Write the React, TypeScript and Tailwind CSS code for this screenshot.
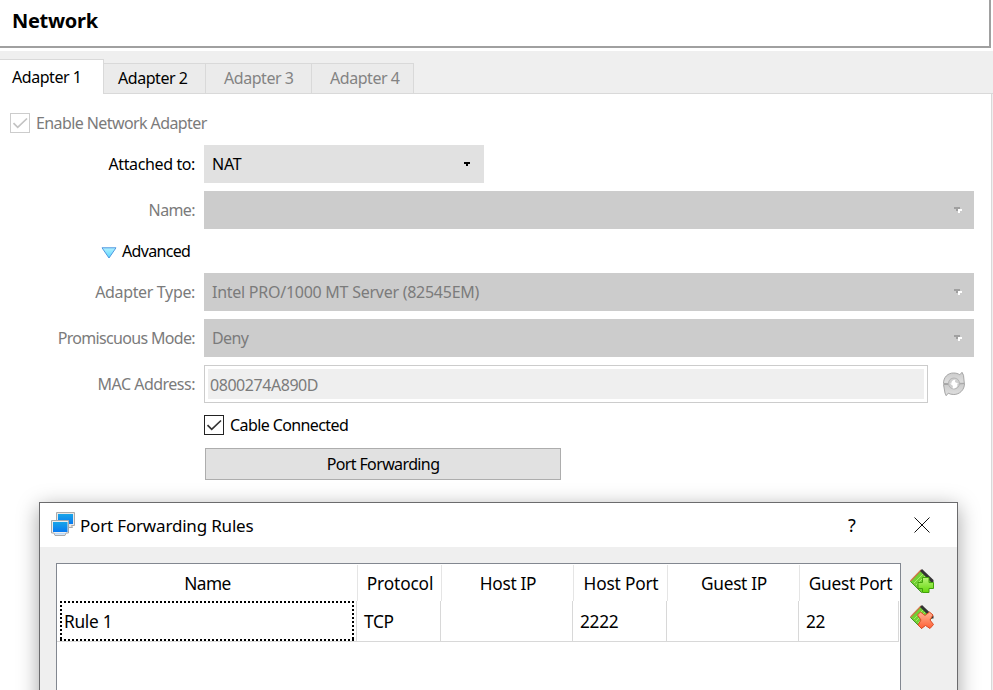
import type { ReactNode } from "react";

const tabs = [
  { label: "Adapter 2", box: "w-[102px] pl-[14px]", color: "text-black" },
  { label: "Adapter 3", box: "w-[106px] pl-[18px]", color: "text-[#838383]" },
  { label: "Adapter 4", box: "w-[102px] pl-[18px]", color: "text-[#838383]" },
];

const columns = [
  { name: "Name", value: "Rule 1", head: "w-[301px] pl-px", cell: "w-[300px] pl-[7px]", track: "tracking-[-0.6px]" },
  { name: "Protocol", value: "TCP", head: "w-[84px] pl-px", cell: "w-[84px] pl-[7px]", track: "tracking-[-0.150px]" },
  { name: "Host IP", value: "", head: "w-[132px] pl-px", cell: "w-[132px]", track: "tracking-[-0.3px]" },
  { name: "Host Port", value: "2222", head: "w-[94px] pl-px", cell: "w-[94px] pl-[7px]", track: "tracking-[-0.2px]" },
  { name: "Guest IP", value: "", head: "w-[132px] pl-px", cell: "w-[132px]", track: "tracking-[-0.3px]" },
  { name: "Guest Port", value: "22", head: "w-[101px] border-r-0", cell: "w-[100px] pl-[7px]", track: "tracking-[-0.3px]" },
];

function Label({ children, className = "" }: { children: ReactNode; className?: string }) {
  return <div className={`w-[196px] shrink-0 whitespace-nowrap pr-px text-right ${className}`}>{children}</div>;
}

function DisabledArrow() {
  return (
    <svg width="9" height="7" viewBox="0 0 9 7" shapeRendering="crispEdges">
      <path d="M4 2h4v2H6v2H4z" fill="#fff" />
      <path d="M0 0h6v2H4v2H2V2H0z" fill="#a0a0a0" />
    </svg>
  );
}

function DisabledSelect({ children }: { children?: ReactNode }) {
  return (
    <div className="ml-2 flex h-[38px] w-[770px] items-center justify-between bg-[#ccc] pl-2 pr-[11px]">
      <span>{children}</span>
      <DisabledArrow />
    </div>
  );
}

function Check({ color }: { color: string }) {
  return (
    <svg width="18" height="18" viewBox="0 0 18 18" fill="none" stroke={color} strokeWidth="1.7">
      <path d="M2.5 9.2l4.2 4.2L16 4.5" />
    </svg>
  );
}

function RefreshIcon() {
  return (
    <svg width="24" height="26" viewBox="0 0 24 26">
      <defs>
        <linearGradient id="ring" x1="0" y1="0" x2="0" y2="1">
          <stop offset="0" stopColor="#cbcbcb" />
          <stop offset="1" stopColor="#e0e0e0" />
        </linearGradient>
      </defs>
      <g fill="url(#ring)" stroke="#a6a6a6" strokeWidth="1">
        <path d="M1.500 12.500C1.500 6 6 2 11.500 2c2.500 0 4.500.6 6.300 1.800L20 1.300l1.500 3 .8 8H13z" />
        <path d="M22.500 12.500c0 6.500-5 11-10.700 11-2.300 0-4-.5-5.600-1.300L4.200 24.700 3 22l-1.500-8.500h9z" />
        <path d="M6.500 12.500c0-3.500 2.500-5.500 5.500-5.500 3.500 0 5.500 2.500 5.500 5.500s-2.500 5.500-5.500 5.500-5.500-2.300-5.500-5.500z" fill="#cfcfcf" stroke="#b5b5b5" />
      </g>
      <path
        d="M13.500 8.500c-3.200.3-4.500 2.300-4 4l-1.500 0 3 2.500c-.5 1-.3 2-.3 2.500 3.500 0 5.300-2 4.500-4.500h1.500l-3.700-2c0-1 .2-1.800.5-2.500z"
        fill="#fff"
      />
    </svg>
  );
}

function WindowsIcon() {
  return (
    <svg width="25" height="25" viewBox="0 0 25 25">
      <defs>
        <linearGradient id="screen" x1="0" y1="0" x2="0" y2="1">
          <stop offset="0" stopColor="#19a5e8" />
          <stop offset="1" stopColor="#0879f0" />
        </linearGradient>
      </defs>
      <path d="M5.500.5h18v13h-3l1 2h-8v-2h-8z" fill="#e8e8e8" stroke="#aaa" />
      <path d="M7 2h15v10H7z" fill="url(#screen)" />
      <path d="M.5 8.500h17v12.500h-2.500l-1 2.500h-10l-1-2.500h-2.500z" fill="#eee" stroke="#aaa" />
      <path d="M2 10h14.500v10H2z" fill="url(#screen)" />
      <path d="M4 21h10v1.500H4z" fill="#b8d8f8" />
    </svg>
  );
}

function RuleIcon({ remove = false }: { remove?: boolean }) {
  return (
    <svg width="26" height="26" viewBox="0 0 26 26">
      <defs>
        <linearGradient id="plus" x1="0" y1="0" x2="0" y2="1">
          <stop offset="0" stopColor="#b7f477" />
          <stop offset="1" stopColor="#65d80c" />
        </linearGradient>
        <linearGradient id="cross" x1="0" y1="0" x2="0" y2="1">
          <stop offset="0" stopColor="#ffb393" />
          <stop offset="1" stopColor="#ff6035" />
        </linearGradient>
      </defs>
      <path d="M1.500 13.500L12.500 2l11 11.500-11 11z" fill="#72cf33" stroke="#45942a" />
      <path d="M5 15L15 5M7 17L17 7M9 19L19 9" stroke="#a4ec67" strokeWidth="1" />
      <path d="M1.500 13L12 2" stroke="#d87a4a" strokeWidth="1.200" />
      <path d="M11 3l2-2 11.500 11v2.500h-2z" fill="#333" />
      {remove ? (
        <path
          d="M8.500 11l3-3 4.500 3.500L20.500 8l3.500 3-3 5 3.500 4.500-3.500 4-4.500-3-4 3-3.500-3.500 3-5z"
          fill="url(#cross)"
          stroke="#db4b26"
        />
      ) : (
        <path d="M13.500 9.500h6.500v5h4.500v6H20v4h-6.500v-4H9v-6h4.500z" fill="url(#plus)" stroke="#42a10c" />
      )}
    </svg>
  );
}

function PortForwardingDialog() {
  return (
    <section className="absolute left-[39px] top-[502px] h-[260px] w-[919px] border border-[#6b6b6d] bg-[#efefef] font-['Noto_Sans',sans-serif] text-[17.300px] text-black shadow-[0_5px_20px_rgba(0,0,0,0.36)]">
      <header className="flex h-[44px] items-center bg-white">
        <div className="ml-[11px] mt-[-1px]">
          <WindowsIcon />
        </div>
        <h2 className="ml-1 w-[760px] whitespace-nowrap pt-px text-[17px] tracking-[-0.180px]">Port Forwarding Rules</h2>
        <span className="ml-2 w-[12px] text-[18px]">?</span>
        <svg className="ml-[54px] mt-[-1px]" width="16" height="16" viewBox="0 0 16 16" stroke="#111" strokeWidth="1">
          <path d="M.5.5l15 15M15.500.5l-15 15" />
        </svg>
      </header>
      <div className="flex pl-4 pt-4">
        <div className="h-[200px] w-[845px] border border-[#828790] bg-white">
          <div className="flex h-[37px] pt-px">
            {columns.map((c) => (
              <div
                key={c.name}
                className={`flex shrink-0 items-center justify-center whitespace-nowrap border-r border-[#e5e5e5] pt-px ${c.head} ${c.track}`}
              >
                {c.name}
              </div>
            ))}
          </div>
          <div className="relative flex h-[41px] w-[842px] border-b border-[#d8d8d8]">
            {columns.map((c) => (
              <div key={c.name} className={`flex shrink-0 items-center border-r border-[#d8d8d8] pt-[2px] tracking-[-0.300px] ${c.cell}`}>
                {c.value}
              </div>
            ))}
            <svg className="absolute left-[3px] top-0" width="294" height="40" viewBox="0 0 294 40" shapeRendering="crispEdges">
              <path
                d="M0 1h294M0 39h294M1 0v40M293 0v40"
                fill="none"
                stroke="#000"
                strokeWidth="2"
                strokeDasharray="2 2"
              />
            </svg>
          </div>
        </div>
        <div className="ml-2 mt-[5px] flex flex-col gap-[10px]">
          <RuleIcon />
          <RuleIcon remove />
        </div>
      </div>
    </section>
  );
}

export default function App() {
  return (
    <main className="relative h-[690px] w-[993px] overflow-hidden bg-white font-['Noto_Sans',sans-serif] text-[16px] leading-[22px] tracking-[-0.450px] text-[#7b7b7b]">
      <header className="h-[48px] w-[991px] border-b-2 border-r-2 border-[#a0a0a0] pl-3 pt-[10px]">
        <h1 className="text-[20px] font-bold tracking-[-0.300px] text-black">Network</h1>
      </header>
      <nav className="mt-[3px] flex h-[43px] items-end bg-[#efefef]">
        <div className="h-[35px] w-[104px] border-r border-t border-[#d9d9d9] bg-white pl-3 pt-[6px] text-black">Adapter 1</div>
        {tabs.map((t) => (
          <div key={t.label} className={`h-[31px] border-b border-r border-t border-[#d9d9d9] bg-[#ebebeb] pt-[3px] ${t.box} ${t.color}`}>
            {t.label}
          </div>
        ))}
        <div className="h-px w-[579px] bg-[#d9d9d9]" />
      </nav>
      <div className="flex">
        <div className="h-[596px] w-[992px] border-r border-[#d9d9d9] pt-[19px]">
          <div className="flex h-5 items-center pl-[10px]">
            <div className="size-5 border border-[#ccc]">
              <Check color="#c3c3c3" />
            </div>
            <span className="ml-[6px] tracking-[-0.590px]">Enable Network Adapter</span>
          </div>
          <div className="mt-3 flex items-center">
            <Label className="tracking-[-0.380px] text-black">Attached to:</Label>
            <div className="ml-2 flex h-[38px] w-[280px] items-center justify-between bg-[#e1e1e1] pl-2 pr-[14px] text-black">
              <span className="tracking-[-0.200px]">NAT</span>
              <svg className="mb-px" width="6" height="4" viewBox="0 0 6 4" shapeRendering="crispEdges">
                <path d="M0 0h6v2H4v2H2V2H0z" />
              </svg>
            </div>
          </div>
          <div className="mt-2 flex items-center">
            <Label className="tracking-[-0.600px]">Name:</Label>
            <DisabledSelect />
          </div>
          <div className="mt-[11px] flex h-[22px] items-center pl-[101px] text-black">
            <svg className="mt-[3px]" width="16" height="12" viewBox="0 0 16 12">
              <defs>
                <linearGradient id="expander" x1="0" y1="0" x2="0" y2="1">
                  <stop offset="0" stopColor="#b4f2ff" />
                  <stop offset="1" stopColor="#55d5ff" />
                </linearGradient>
              </defs>
              <path d="M1 .8h14L8 11z" fill="url(#expander)" stroke="#4f97e0" />
            </svg>
            <span className="ml-[5px] tracking-[-0.680px]">Advanced</span>
          </div>
          <div className="mt-[11px] flex items-center">
            <Label className="tracking-[-0.350px]">Adapter Type:</Label>
            <DisabledSelect>
              <span className="tracking-[-0.260px]">Intel PRO/1000 MT Server (82545EM)</span>
            </DisabledSelect>
          </div>
          <div className="mt-2 flex items-center">
            <Label className="tracking-[-0.670px]">Promiscuous Mode:</Label>
            <DisabledSelect>
              <span className="tracking-[-0.650px]">Deny</span>
            </DisabledSelect>
          </div>
          <div className="mt-2 flex items-center">
            <Label className="tracking-[-0.500px]">MAC Address:</Label>
            <div className="ml-2 flex h-[38px] w-[724px] border border-[#ccc] p-[3px]">
              <div className="flex flex-1 items-center bg-[#efefef] pl-[2px] pt-[2px]">0800274A890D</div>
            </div>
            <div className="ml-[14px]">
              <RefreshIcon />
            </div>
          </div>
          <div className="mt-3 flex h-5 items-center pl-[204px] text-black">
            <div className="size-5 border border-[#222]">
              <Check color="#333" />
            </div>
            <span className="ml-[6px] tracking-[-0.600px]">Cable Connected</span>
          </div>
          <button className="ml-[205px] mt-[13px] block h-8 w-[356px] border border-[#adadad] bg-[#e1e1e1] tracking-[-0.620px] text-black">
            Port Forwarding
          </button>
        </div>
        <div className="h-[596px] w-px bg-[#efefef]" />
      </div>
      <PortForwardingDialog />
    </main>
  );
}
